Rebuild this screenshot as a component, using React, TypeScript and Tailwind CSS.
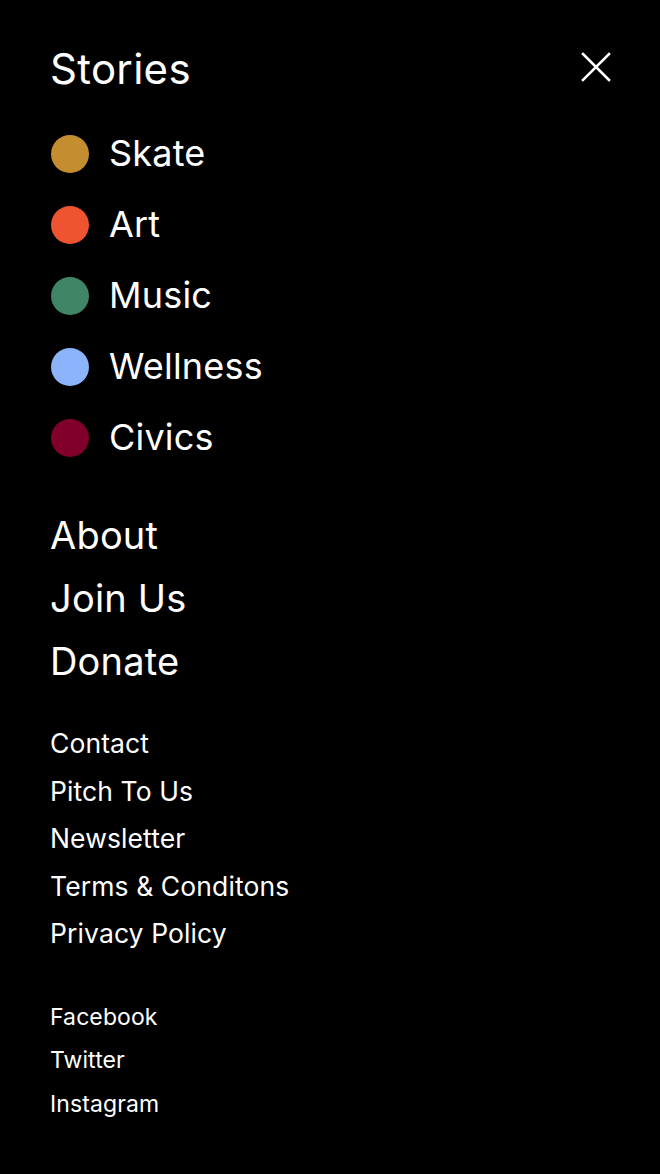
import React from "react";

const stories = [
  { name: "Skate", color: "bg-[#c48d2f]" },
  { name: "Art", color: "bg-[#ef5431]" },
  { name: "Music", color: "bg-[#418567]" },
  { name: "Wellness", color: "bg-[#8cb4fb]" },
  { name: "Civics", color: "bg-[#81002b]" },
];

const mainLinks = ["About", "Join Us", "Donate"];
const infoLinks = ["Contact", "Pitch To Us", "Newsletter", "Terms & Conditons", "Privacy Policy"];
const socialLinks = ["Facebook", "Twitter", "Instagram"];

const CloseIcon = () => (
  <svg width="30" height="30" viewBox="0 0 30 30" fill="none" className="text-white">
    <path d="M2 2L28 28M28 2L2 28" stroke="currentColor" strokeWidth="2.6" strokeLinecap="square" />
  </svg>
);

export default function App() {
  return (
    <div
      className="min-h-[1174px] w-full bg-black text-white pl-[50px] pr-[50px] pt-[45px]"
      style={{ fontFamily: "Inter, 'Noto Sans', sans-serif" }}
    >
      <div className="flex items-center justify-between h-[48px]">
        <span className="text-[42px] leading-[48px] tracking-[0.3px]">Stories</span>
        <button className="-mt-[4px] mr-[-1px]">
          <CloseIcon />
        </button>
      </div>

      <ul className="mt-[25px]">
        {stories.map(s => (
          <li key={s.name} className="flex items-center gap-[20px] h-[71px]">
            <span className={`ml-[1px] w-[38px] h-[38px] rounded-full ${s.color}`} />
            <span className="text-[36px] leading-[71px] tracking-[0.2px]">{s.name}</span>
          </li>
        ))}
      </ul>

      <ul className="mt-[31px]">
        {mainLinks.map(l => (
          <li key={l} className="text-[38px] leading-[63px] tracking-[0.2px]">
            {l}
          </li>
        ))}
      </ul>

      <ul className="mt-[27px]">
        {infoLinks.map(l => (
          <li key={l} className="text-[26.5px] leading-[47.5px] tracking-[0.1px]">
            {l}
          </li>
        ))}
      </ul>

      <ul className="mt-[38px]">
        {socialLinks.map(l => (
          <li key={l} className="text-[23px] leading-[43.5px] tracking-[0.1px]">
            {l}
          </li>
        ))}
      </ul>
    </div>
  );
}
